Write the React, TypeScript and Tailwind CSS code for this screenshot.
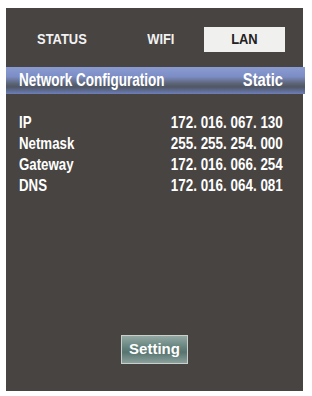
import React from "react";

const sans = { fontFamily: '"Liberation Sans", Arial, sans-serif' };

const rows: [string, string][] = [
  ["IP", "172. 016. 067. 130"],
  ["Netmask", "255. 255. 254. 000"],
  ["Gateway", "172. 016. 066. 254"],
  ["DNS", "172. 016. 064. 081"],
];

export default function App() {
  return (
    <div className="w-[312px] h-[396px] bg-white pt-[8px] pl-[6px]" style={sans}>
      <div className="w-[297px] h-[383px] bg-[#484442] flex flex-col">
        <div className="flex items-center mt-[19px] h-[25px] font-bold text-[15px] text-[#f2f2f2]">
          <div className="w-[112px] text-center"><span className="inline-block scale-x-[0.86]">STATUS</span></div>
          <div className="w-[86px] text-center"><span className="inline-block scale-x-[0.86]">WIFI</span></div>
          <div className="w-[81px] h-[25px] bg-[#f0f0ee] text-[#222] flex items-center justify-center"><span className="inline-block scale-x-[0.86]">LAN</span></div>
        </div>
        <div className="mt-[15px] h-[27px] -mr-[2px] flex items-center justify-between pl-[13px] pr-[22px] text-[18px] font-bold text-white bg-[linear-gradient(to_bottom,#8a9bd2_0%,#7d8ec6_35%,#5b6374_62%,#4f5664_74%,#6c7fb9_100%)]">
          <span className="inline-block origin-left scale-x-[0.75] whitespace-nowrap">Network Configuration</span>
          <span className="inline-block origin-right scale-x-[0.82]">Static</span>
        </div>
        <div className="mt-[18px] pl-[13px] pr-[20px] flex flex-col text-[17px] leading-[21px] font-bold text-white">
          {rows.map(([k, v]) => (
            <div key={k} className="flex justify-between">
              <span className="inline-block origin-left scale-x-[0.78]">{k}</span>
              <span className="inline-block origin-right scale-x-[0.79] whitespace-pre">{v}</span>
            </div>
          ))}
        </div>
        <div className="flex-1" />
        <div className="flex justify-center mb-[27px]">
          <div className="w-[67px] h-[29px] border border-[#c9cfcd] flex items-center justify-center text-[15px] font-bold text-white bg-[linear-gradient(to_bottom,#93a8a3_0%,#62807a_45%,#587470_60%,#8aa09b_100%)]">
            Setting
          </div>
        </div>
      </div>
    </div>
  );
}
